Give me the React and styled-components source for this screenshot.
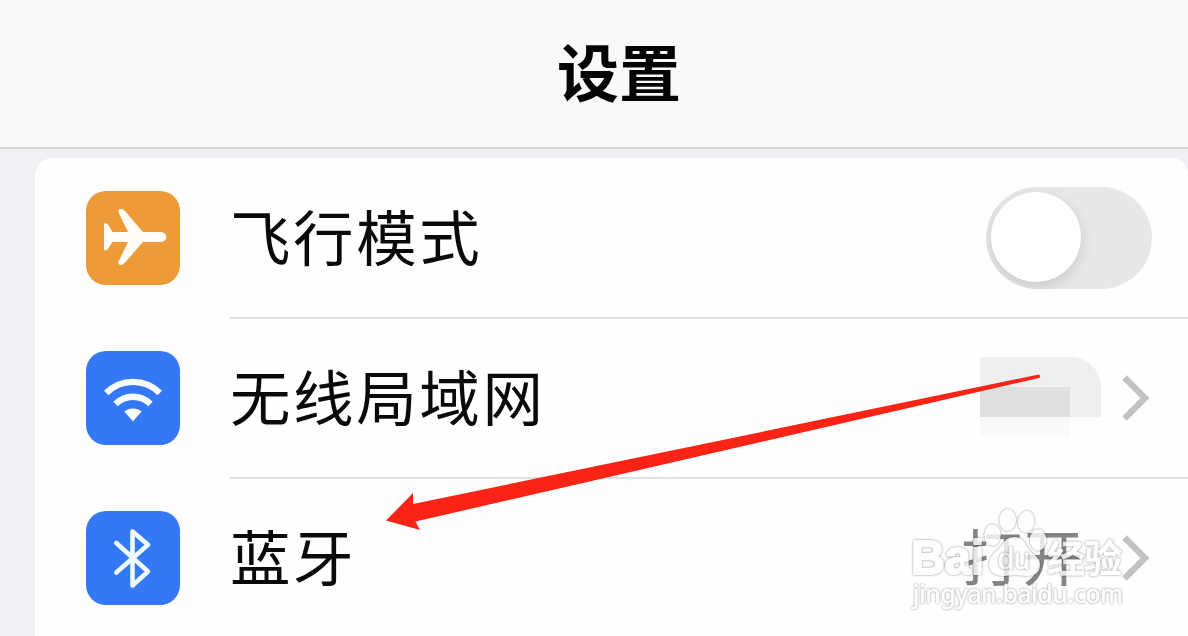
import styled, { createGlobalStyle } from 'styled-components';

const GlobalStyle = createGlobalStyle`
  * {
    box-sizing: border-box;
  }

  body {
    margin: 0;
    overflow: hidden;
    font-family: 'Liberation Sans', 'Noto Sans CJK SC', sans-serif;
  }
`;

const Screen = styled.div`
  position: relative;
  display: flex;
  flex-direction: column;
  width: 1188px;
  height: 636px;
  background: #f0eff4;
  overflow: hidden;
`;

const Header = styled.header`
  display: flex;
  flex-shrink: 0;
  align-items: center;
  justify-content: center;
  height: 149px;
  padding: 0 0 8px 50px;
  border-bottom: 2px solid #d6d6d9;
  background: #f9f9fa;
`;

const Title = styled.h1`
  margin: 0;
  color: #050505;
  font-family: 'Noto Sans CJK SC', sans-serif;
  font-size: 62px;
  font-weight: 700;
  line-height: 90px;
`;

const Panel = styled.main`
  flex-shrink: 0;
  margin: 9px 0 0 35px;
  border-radius: 18px 16px 0 0;
  background: #fefefe;
`;

const Row = styled.div`
  display: flex;
  height: 160px;
  padding-left: 51px;
`;

const IconBox = styled.div`
  align-self: center;
  width: 94px;
  height: 94px;
  flex-shrink: 0;
  margin-right: 50px;
  border-radius: 20px;
  background: ${({ $color }) => $color};

  svg {
    display: block;
  }
`;

const RowContent = styled.div`
  display: flex;
  align-items: center;
  flex-grow: 1;
  height: 161px;
  padding-right: ${({ $end }) => $end || '39px'};
  border-bottom: 2px solid #e0e0e1;
`;

const Label = styled.span`
  flex-grow: 1;
  padding-bottom: 5px;
  color: #0a0a0a;
  font-family: 'Noto Sans CJK SC', sans-serif;
  font-size: 60.5px;
  letter-spacing: 2.6px;
  line-height: 90px;
`;

const Value = styled.span`
  margin-right: 39px;
  padding-bottom: 5px;
  color: #858587;
  font-family: 'Noto Sans CJK SC', sans-serif;
  font-size: 61px;
  line-height: 90px;
`;

const Switch = styled.div`
  width: 166px;
  height: 102px;
  padding: 5px;
  border-radius: 51px;
  background: #e7e7e8;
  overflow: hidden;
`;

const Knob = styled.div`
  width: 90px;
  height: 90px;
  border-radius: 50%;
  background: #fff;
  box-shadow: 0 5px 14px rgba(0, 0, 0, 0.13);
`;

const Mosaic = styled.div`
  display: flex;
  flex-direction: column;
  width: 121px;
  height: 80px;
  margin: 0 21px 2px 0;
`;

const MosaicTop = styled.div`
  display: flex;
  align-items: flex-end;
  height: 60px;
  border-top-right-radius: 30px;
  background: #efefef;
`;

const MosaicDark = styled.div`
  width: 90px;
  height: 30px;
  background: #dfdfdf;
`;

const MosaicFaint = styled.div`
  width: 90px;
  height: 20px;
  background: #f9f9f9;
`;

const Overlay = styled.svg`
  position: absolute;
  top: 0;
  left: 0;
  pointer-events: none;
`;

// white shapes that show on a white page only by their thin grey rim
const Mark = styled.g`
  fill: #fff;
  stroke: #fff;
  stroke-linejoin: round;
  opacity: 0.8;

  > * {
    filter: drop-shadow(0 0 0.8px rgba(0, 0, 0, 0.55));
  }
`;

function PlaneIcon() {
  return (
    <svg width="94" height="94" viewBox="0 0 94 94" fill="#fffdf5">
      <path d="M42 41 33 22.5C31.8 19.5 32.5 18 35 18c1.6 0 2.8.7 4.2 2.3L57 41h17c4 0 6.3 2.2 6.3 5S78 51 74 51H57L39 71.5C37.6 73.2 36.4 74 34.8 74c-2.3 0-3-1.6-2-4.1L42 51H26.5L22 58c-1 1.500-4 2.200-4 0V33.600c0-2.300 3.200-1.400 4 0l4.500 7.400Z" />
    </svg>
  );
}

function WifiIcon() {
  return (
    <svg width="94" height="94" viewBox="0 0 94 94" fill="none" stroke="#f7fdff" strokeWidth="6.4">
      <path d="M20.3 42C35 27.1 59 27.1 73.7 42M29.5 53C39.5 43.4 54.5 43.4 64.5 53" />
      <path d="M38.3 60.5C43 56.5 51 56.5 55.7 60.5L47 70.2Z" fill="#f7fdff" stroke="none" />
    </svg>
  );
}

function BluetoothIcon() {
  return (
    <svg
      width="94"
      height="94"
      viewBox="0 0 94 94"
      fill="none"
      stroke="#edfaff"
      strokeWidth="4.6"
      strokeLinecap="round"
      strokeLinejoin="round"
    >
      <path d="M30.3 61.5 62 33.8 46.5 20.5v54L62 60.5 30.3 32" />
    </svg>
  );
}

function Chevron() {
  return (
    <svg width="27" height="46" viewBox="0 0 27 46" fill="none" stroke="#c2c2c3" strokeWidth="6.5">
      <path d="M2.5 2.5 23 23 2.5 43.5" />
    </svg>
  );
}

function Watermark() {
  return (
    <Mark fontFamily="Liberation Sans">
      <text
        x="911"
        y="574"
        fontSize="48"
        fontWeight="700"
        textLength="73"
        lengthAdjust="spacingAndGlyphs"
        strokeWidth="2"
      >
        Bai
      </text>
      <g strokeWidth="0">
        <ellipse cx="992.5" cy="535" rx="8.3" ry="10.7" />
        <ellipse cx="1007.7" cy="520" rx="8.3" ry="11" />
        <ellipse cx="1026.3" cy="521.5" rx="8.3" ry="10.6" transform="rotate(10 1026 521)" />
        <ellipse cx="1038" cy="540" rx="8.3" ry="10.7" />
        <path d="M1015 537c7 0 9 4 12 10 4 7 13 9 13 18 0 8-6 11-13 11-5 0-8-1-12-1s-7 1-12 1c-8 0-14-4-14-12 0-9 8-12 13-19 3-5 6-8 13-8Z" />
      </g>
      <text
        x="998"
        y="569"
        fontSize="29"
        textLength="32"
        lengthAdjust="spacingAndGlyphs"
        strokeWidth="0.8"
      >
        du
      </text>
      <text
        x="1047"
        y="571.5"
        fontFamily="Noto Sans CJK SC"
        fontSize="38"
        fontWeight="700"
        textLength="75"
        strokeWidth="0.4"
      >
        经验
      </text>
      <text
        x="913"
        y="603"
        fontFamily="Noto Sans"
        fontSize="25"
        textLength="210"
        lengthAdjust="spacingAndGlyphs"
        strokeWidth="0.6"
      >
        jingyan.baidu.com
      </text>
    </Mark>
  );
}

function App() {
  return (
    <>
      <GlobalStyle />
      <Screen>
        <Header>
          <Title>设置</Title>
        </Header>

        <Panel>
          <Row>
            <IconBox $color="#ed9a38">
              <PlaneIcon />
            </IconBox>
            <RowContent $end="36px">
              <Label>飞行模式</Label>
              <Switch>
                <Knob />
              </Switch>
            </RowContent>
          </Row>

          <Row>
            <IconBox $color="#3478f6">
              <WifiIcon />
            </IconBox>
            <RowContent>
              <Label>无线局域网</Label>
              <Mosaic>
                <MosaicTop>
                  <MosaicDark />
                </MosaicTop>
                <MosaicFaint />
              </Mosaic>
              <Chevron />
            </RowContent>
          </Row>

          <Row>
            <IconBox $color="#3478f6">
              <BluetoothIcon />
            </IconBox>
            <RowContent>
              <Label>蓝牙</Label>
              <Value>打开</Value>
              <Chevron />
            </RowContent>
          </Row>
        </Panel>

        <Overlay width="1188" height="636" viewBox="0 0 1188 636">
          <path d="M386 520.5 413 493v11L1039 374.5q2 1.5 0 3.5L415.5 521.5 420 530Z" fill="#fb2315" />
          <Watermark />
        </Overlay>
      </Screen>
    </>
  );
}

export default App;
